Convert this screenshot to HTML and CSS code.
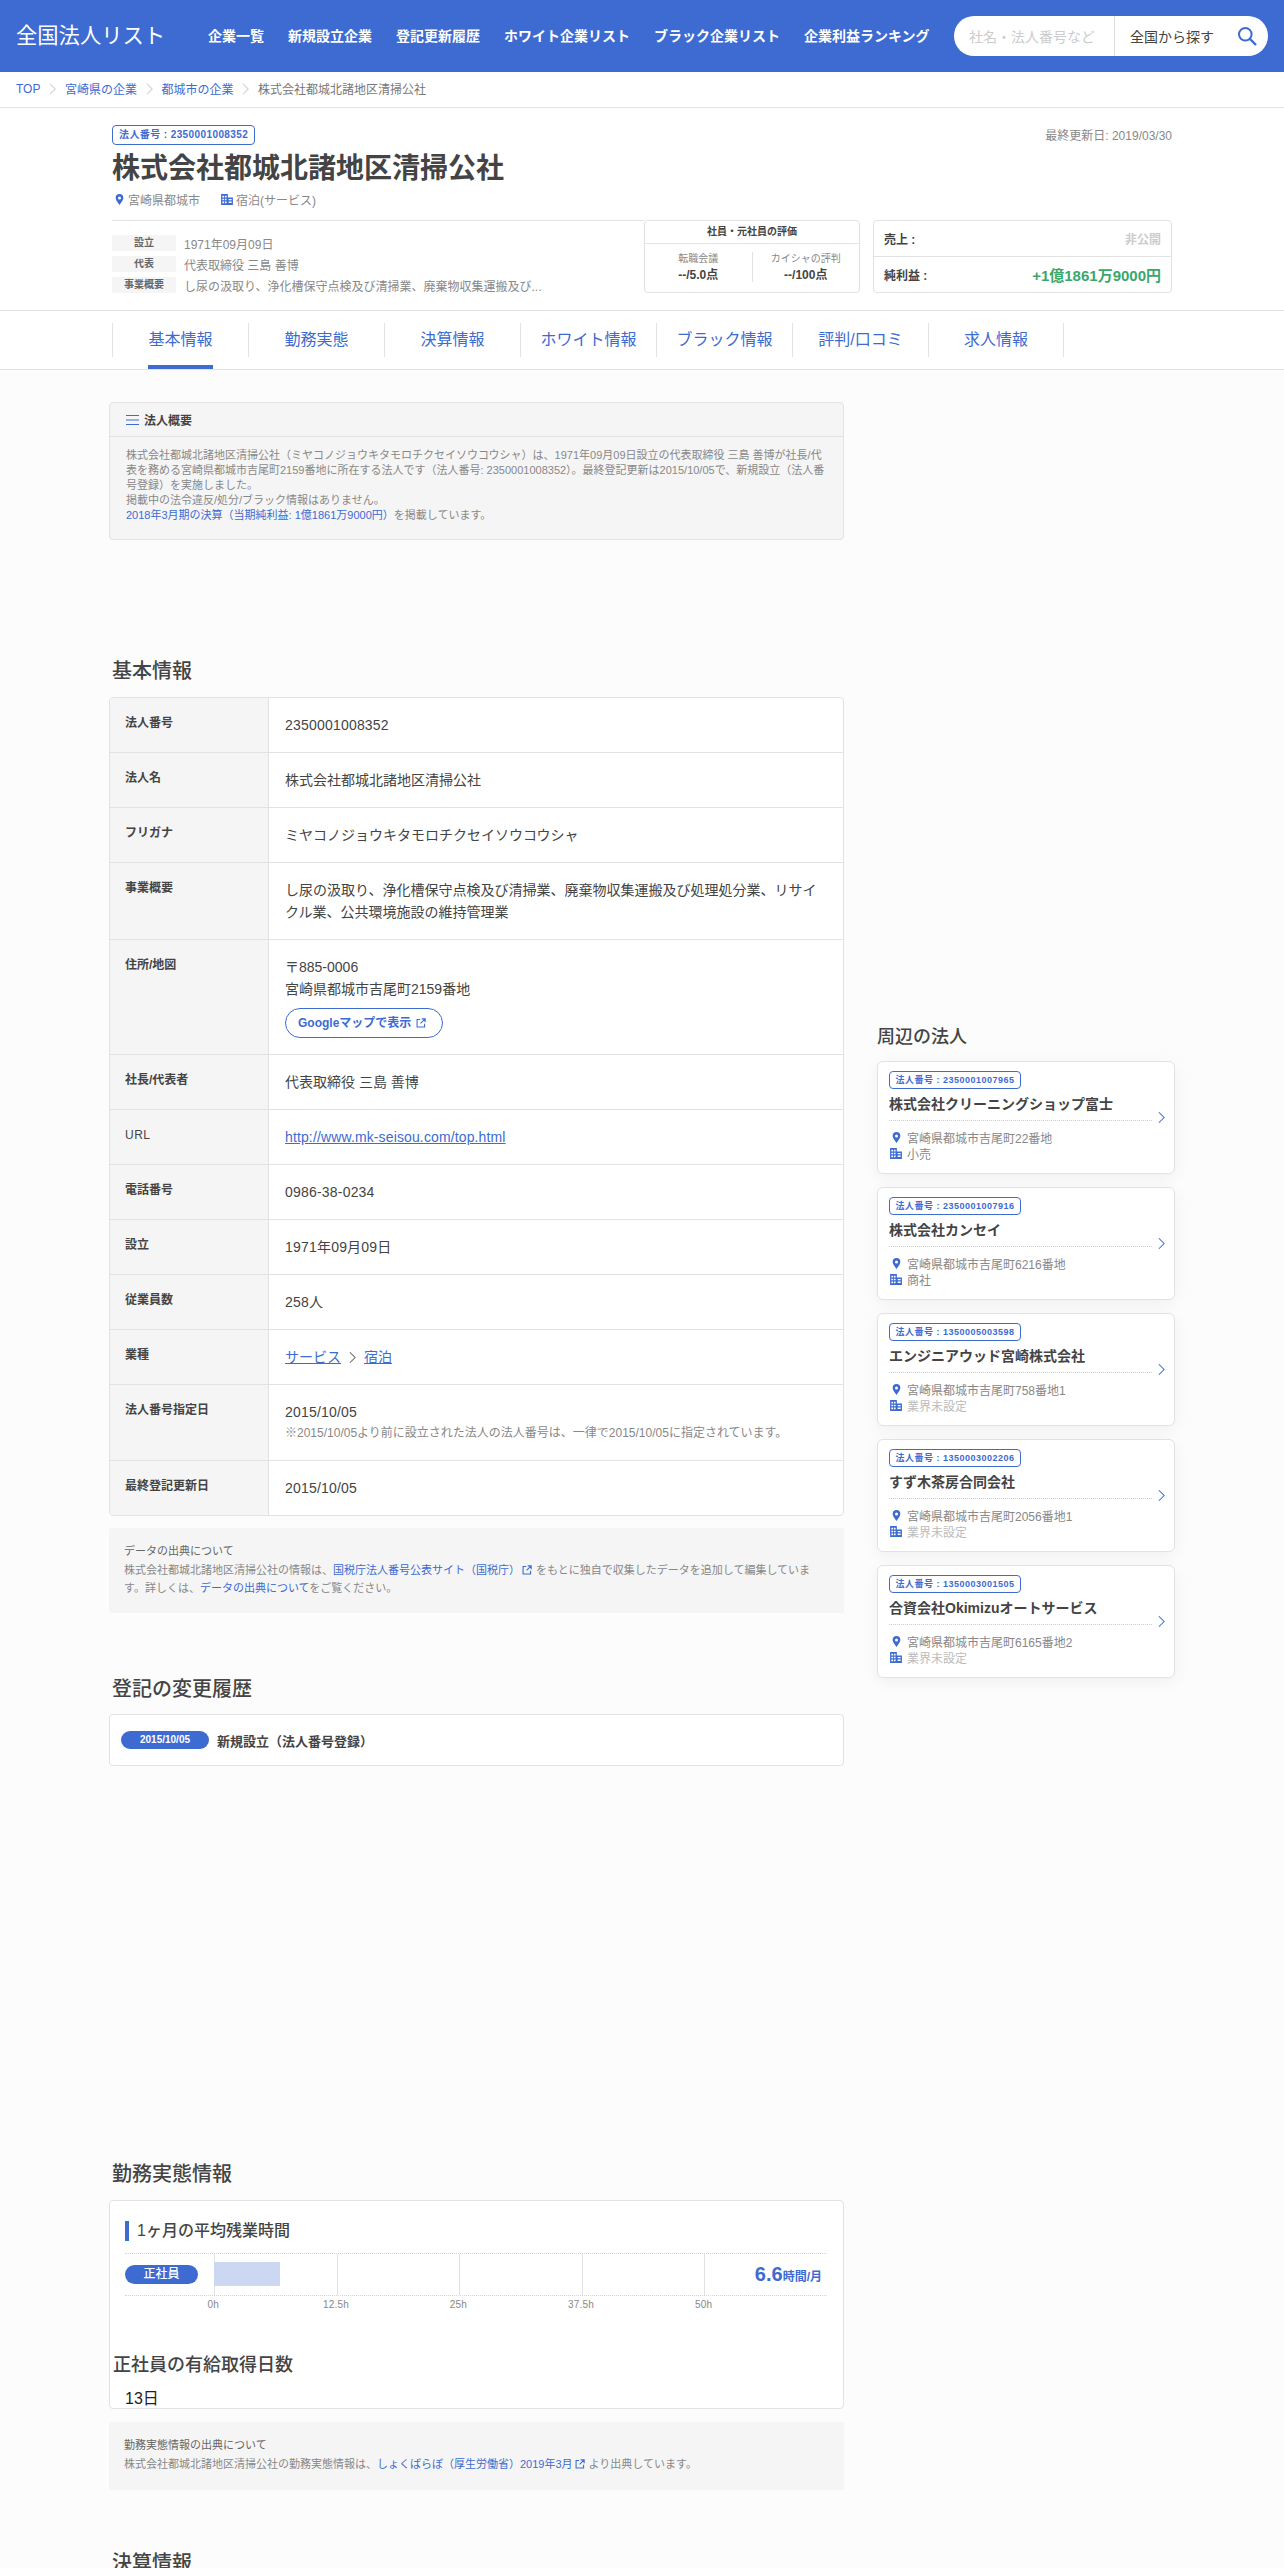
FILE: index.html
```html
<!DOCTYPE html>
<html lang="ja">
<head>
<meta charset="utf-8">
<title>株式会社都城北諸地区清掃公社</title>
<link rel="stylesheet" href="styles.css">
</head>
<body>
<svg class="defs" width="0" height="0" aria-hidden="true">
  <symbol id="pin" viewBox="0 0 12 16"><path fill="#3d6bd1" fill-rule="evenodd" d="M6 0a5.6 5.6 0 0 1 5.6 5.6C11.600 9.500 6 16 6 16S.4 9.500.4 5.600A5.600 5.600 0 0 1 6 0zm0 3.500a2.200 2.200 0 1 0 0 4.400 2.200 2.200 0 0 0 0-4.400z"/></symbol>
  <symbol id="bld" viewBox="0 0 14 13"><path fill="#3d6bd1" fill-rule="evenodd" d="M0 0h8v4h6v9H0zM1.500 2v2h2V2zm3 0v2h2V2zm-3 3.500v2h2v-2zm3 0v2h2v-2zm-3 3.500v2h2V9zm3 0v2h2V9zM9 6v1.500h3.500V6zm0 3v1.500h3.500V9z"/></symbol>
  <symbol id="ext" viewBox="0 0 12 12"><path fill="none" stroke="currentColor" stroke-width="1.300" d="M5 1.700H1.300v9h9V7M6.800 1H11v4.200M11 1 5.500 6.500"/></symbol>
  <symbol id="chev" viewBox="0 0 8 14"><path fill="none" stroke="currentColor" stroke-width="1.200" d="M1 1l6 6-6 6"/></symbol>
</svg>

<header class="site-header">
  <a class="logo">全国法人リスト</a>
  <nav class="main-nav">
    <a>企業一覧</a><a>新規設立企業</a><a>登記更新履歴</a><a>ホワイト企業リスト</a><a>ブラック企業リスト</a><a>企業利益ランキング</a>
  </nav>
  <div class="search">
    <span class="search-input">社名・法人番号など</span>
    <span class="search-area">全国から探す</span>
    <svg class="search-icon" viewBox="0 0 20 20" width="20" height="20"><circle cx="8.300" cy="8.300" r="6.300" fill="none" stroke="#3d6bd1" stroke-width="2"/><path d="M13 13l6 6" stroke="#3d6bd1" stroke-width="2.400"/></svg>
  </div>
</header>

<div class="crumbs">
  <a>TOP</a><svg class="crumb-sep"><use href="#chev"/></svg>
  <a>宮崎県の企業</a><svg class="crumb-sep"><use href="#chev"/></svg>
  <a>都城市の企業</a><svg class="crumb-sep"><use href="#chev"/></svg>
  <span>株式会社都城北諸地区清掃公社</span>
</div>

<section class="company">
  <div class="company-top">
    <span class="badge">法人番号 : 2350001008352</span>
    <span class="updated">最終更新日: 2019/03/30</span>
  </div>
  <h1 class="company-name">株式会社都城北諸地区清掃公社</h1>
  <div class="company-meta">
    <svg class="i-pin"><use href="#pin"/></svg><span>宮崎県都城市</span>
    <svg class="i-bld"><use href="#bld"/></svg><span>宿泊(サービス)</span>
  </div>
  <div class="company-foot">
    <dl class="facts">
      <div class="fact"><dt>設立</dt><dd>1971年09月09日</dd></div>
      <div class="fact"><dt>代表</dt><dd>代表取締役 三島 善博</dd></div>
      <div class="fact"><dt>事業概要</dt><dd>し尿の汲取り、浄化槽保守点検及び清掃業、廃棄物収集運搬及び...</dd></div>
    </dl>
    <div class="eval">
      <div class="eval-head">社員・元社員の評価</div>
      <div class="eval-body">
        <div class="eval-col"><span>転職会議</span><b>--/5.0点</b></div>
        <div class="eval-col"><span>カイシャの評判</span><b>--/100点</b></div>
      </div>
    </div>
    <div class="money">
      <div class="money-row"><b>売上 :</b><b class="muted">非公開</b></div>
      <div class="money-row"><b>純利益 :</b><b class="profit">+1億1861万9000円</b></div>
    </div>
  </div>
</section>

<nav class="tabs">
  <a class="tab active"><span>基本情報</span></a>
  <a class="tab"><span>勤務実態</span></a>
  <a class="tab"><span>決算情報</span></a>
  <a class="tab"><span>ホワイト情報</span></a>
  <a class="tab"><span>ブラック情報</span></a>
  <a class="tab"><span>評判/口コミ</span></a>
  <a class="tab last"><span>求人情報</span></a>
</nav>

<div class="layout">
  <main class="main">
    <section class="summary">
      <div class="summary-head">
        <svg class="list-icon" viewBox="0 0 13 10" width="13" height="10"><path d="M0 .5h13M0 5h13M0 9.500h13" stroke="#3d6bd1"/></svg>
        <b>法人概要</b>
      </div>
      <p class="summary-body">株式会社都城北諸地区清掃公社（ミヤコノジョウキタモロチクセイソウコウシャ）は、1971年09月09日設立の代表取締役 三島 善博が社長/代表を務める宮崎県都城市吉尾町2159番地に所在する法人です（法人番号: 2350001008352）。最終登記更新は2015/10/05で、新規設立（法人番号登録）を実施しました。<br>掲載中の法令違反/処分/ブラック情報はありません。<br><a>2018年3月期の決算（当期純利益: 1億1861万9000円）</a>を掲載しています。</p>
    </section>

    <h2 class="sec-title first">基本情報</h2>
    <div class="info">
      <div class="info-row"><div class="info-k">法人番号</div><div class="info-v num">2350001008352</div></div>
      <div class="info-row"><div class="info-k">法人名</div><div class="info-v">株式会社都城北諸地区清掃公社</div></div>
      <div class="info-row"><div class="info-k">フリガナ</div><div class="info-v">ミヤコノジョウキタモロチクセイソウコウシャ</div></div>
      <div class="info-row"><div class="info-k">事業概要</div><div class="info-v">し尿の汲取り、浄化槽保守点検及び清掃業、廃棄物収集運搬及び処理処分業、リサイクル業、公共環境施設の維持管理業</div></div>
      <div class="info-row"><div class="info-k">住所/地図</div><div class="info-v">〒885-0006<br>宮崎県都城市吉尾町2159番地<a class="map-btn">Googleマップで表示<svg class="i-ext"><use href="#ext"/></svg></a></div></div>
      <div class="info-row"><div class="info-k">社長/代表者</div><div class="info-v">代表取締役 三島 善博</div></div>
      <div class="info-row"><div class="info-k plain">URL</div><div class="info-v"><a class="ul url">http://www.mk-seisou.com/top.html</a></div></div>
      <div class="info-row"><div class="info-k">電話番号</div><div class="info-v num">0986-38-0234</div></div>
      <div class="info-row"><div class="info-k">設立</div><div class="info-v num">1971年09月09日</div></div>
      <div class="info-row"><div class="info-k">従業員数</div><div class="info-v num">258人</div></div>
      <div class="info-row"><div class="info-k">業種</div><div class="info-v"><a class="ul">サービス</a><svg class="i-chev"><use href="#chev"/></svg><a class="ul">宿泊</a></div></div>
      <div class="info-row"><div class="info-k">法人番号指定日</div><div class="info-v"><span class="num">2015/10/05</span><div class="info-note">※2015/10/05より前に設立された法人の法人番号は、一律で2015/10/05に指定されています。</div></div></div>
      <div class="info-row"><div class="info-k">最終登記更新日</div><div class="info-v num">2015/10/05</div></div>
    </div>
    <div class="source">
      <div class="source-title">データの出典について</div>
      <p>株式会社都城北諸地区清掃公社の情報は、<a>国税庁法人番号公表サイト（国税庁）<svg class="i-ext-s"><use href="#ext"/></svg></a>をもとに独自で収集したデータを追加して編集しています。詳しくは、<a>データの出典について</a>をご覧ください。</p>
    </div>

    <h2 class="sec-title history-title">登記の変更履歴</h2>
    <div class="history">
      <span class="pill date">2015/10/05</span>
      <b>新規設立（法人番号登録）</b>
    </div>

    <h2 class="sec-title work-title">勤務実態情報</h2>
    <div class="work">
      <h3 class="bar-title">1ヶ月の平均残業時間</h3>
      <div class="chart">
        <span class="pill staff">正社員</span>
        <div class="plot">
          <i></i><i></i><i></i><i></i><i></i>
          <div class="plot-bar"></div>
          <div class="plot-value"><b>6.6</b><span>時間/月</span></div>
        </div>
      </div>
      <div class="axis"><span>0h</span><span>12.5h</span><span>25h</span><span>37.5h</span><span>50h</span></div>
      <h3 class="leave-title">正社員の有給取得日数</h3>
      <div class="leave-value">13日</div>
    </div>
    <div class="source source-work">
      <div class="source-title">勤務実態情報の出典について</div>
      <p>株式会社都城北諸地区清掃公社の勤務実態情報は、<a>しょくばらぼ（厚生労働省）2019年3月<svg class="i-ext-s"><use href="#ext"/></svg></a>より出典しています。</p>
    </div>

    <h2 class="sec-title finance-title">決算情報</h2>
  </main>

  <aside class="side">
    <h2 class="side-title">周辺の法人</h2>
    <a class="card">
      <span class="badge small">法人番号 : 2350001007965</span>
      <div class="card-name">株式会社クリーニングショップ富士</div>
      <div class="card-line"><svg class="i-pin"><use href="#pin"/></svg>宮崎県都城市吉尾町22番地</div>
      <div class="card-line"><svg class="i-bld"><use href="#bld"/></svg>小売</div>
      <svg class="card-chev"><use href="#chev"/></svg>
    </a>
    <a class="card">
      <span class="badge small">法人番号 : 2350001007916</span>
      <div class="card-name">株式会社カンセイ</div>
      <div class="card-line"><svg class="i-pin"><use href="#pin"/></svg>宮崎県都城市吉尾町6216番地</div>
      <div class="card-line"><svg class="i-bld"><use href="#bld"/></svg>商社</div>
      <svg class="card-chev"><use href="#chev"/></svg>
    </a>
    <a class="card">
      <span class="badge small">法人番号 : 1350005003598</span>
      <div class="card-name">エンジニアウッド宮崎株式会社</div>
      <div class="card-line"><svg class="i-pin"><use href="#pin"/></svg>宮崎県都城市吉尾町758番地1</div>
      <div class="card-line unset"><svg class="i-bld"><use href="#bld"/></svg>業界未設定</div>
      <svg class="card-chev"><use href="#chev"/></svg>
    </a>
    <a class="card">
      <span class="badge small">法人番号 : 1350003002206</span>
      <div class="card-name">すず木茶房合同会社</div>
      <div class="card-line"><svg class="i-pin"><use href="#pin"/></svg>宮崎県都城市吉尾町2056番地1</div>
      <div class="card-line unset"><svg class="i-bld"><use href="#bld"/></svg>業界未設定</div>
      <svg class="card-chev"><use href="#chev"/></svg>
    </a>
    <a class="card">
      <span class="badge small">法人番号 : 1350003001505</span>
      <div class="card-name">合資会社Okimizuオートサービス</div>
      <div class="card-line"><svg class="i-pin"><use href="#pin"/></svg>宮崎県都城市吉尾町6165番地2</div>
      <div class="card-line unset"><svg class="i-bld"><use href="#bld"/></svg>業界未設定</div>
      <svg class="card-chev"><use href="#chev"/></svg>
    </a>
  </aside>
</div>
</body>
</html>
```
FILE: styles.css
```css
* { box-sizing: border-box; }
html, body { margin: 0; padding: 0; }
body {
  height: 2568px;
  overflow: hidden;
  background: #fcfcfc;
  color: #444;
  font-family: "Liberation Sans", "Noto Sans CJK JP", sans-serif;
  font-size: 14px;
}
h1, h2, h3, p, dl, dd { margin: 0; }
.defs { position: absolute; }

/* header */
.site-header {
  display: flex;
  align-items: center;
  height: 72px;
  padding: 0 16px;
  background: #3d6bd1;
  color: #fff;
}
.logo { width: 192px; font-size: 21.3px; font-weight: 400; line-height: 24px; white-space: nowrap; }
.main-nav { display: flex; gap: 24px; font-size: 14px; font-weight: 700; margin-top: -2px; white-space: nowrap; }
.search {
  display: flex;
  align-items: center;
  width: 314px;
  height: 40px;
  margin-left: auto;
  background: #fff;
  border-radius: 20px;
  font-size: 14px;
}
.search-input { width: 160px; padding-left: 15px; color: #ccc; white-space: nowrap; }
.search-area { flex: 1; align-self: stretch; display: flex; align-items: center; padding-left: 15px; border-left: 1px solid #ddd; color: #444; }
.search-icon { margin-right: 11px; }

/* breadcrumb */
.crumbs {
  display: flex;
  align-items: center;
  height: 36px;
  padding: 0 16px 2px;
  background: #fff;
  border-bottom: 1px solid #e2e2e2;
  font-size: 12px;
  color: #777;
}
.crumbs a { color: #3d6bd1; }
.crumb-sep { width: 7px; height: 14px; margin: 0 8.500px 0 9px; color: #ccc; }

/* company */
.company {
  height: 203px;
  padding: 16px 112px 0;
  background: #fff;
  border-bottom: 1px solid #e2e2e2;
}
.company-top { display: flex; justify-content: space-between; align-items: center; height: 21px; }
.badge {
  display: inline-block;
  height: 20px;
  padding: 0 6px;
  border: 1px solid #3d6bd1;
  border-radius: 4px;
  color: #3d6bd1;
  font-size: 10px;
  font-weight: 700;
  line-height: 18px;
  letter-spacing: .4px;
  white-space: nowrap;
}
.updated { font-size: 12px; color: #888; }
.company-name { margin-top: 6px; font-size: 28px; line-height: 36px; font-weight: 700; color: #444; }
.company-meta { display: flex; align-items: center; height: 20px; margin-top: 2px; font-size: 12px; color: #888; }
.company-meta .i-pin { margin: 0 4px 0 3px; }
.company-meta .i-bld { margin: 0 3px 0 21px; }
.i-pin { width: 9px; height: 11px; flex: none; }
.i-bld { width: 12px; height: 11px; flex: none; }
.company-foot { display: flex; align-items: flex-start; margin-top: 11px; }
.facts { width: 532px; margin-right: 0; padding-top: 14px; border-top: 1px solid #e2e2e2; }
.fact { display: flex; align-items: center; height: 16px; margin-bottom: 5px; }
.fact dt { width: 64px; height: 16px; background: #f5f5f5; color: #666; font-size: 10px; font-weight: 700; line-height: 16px; text-align: center; }
.fact dd { margin-left: 8px; font-size: 12px; color: #888; white-space: nowrap; }
.eval, .money { height: 73px; background: #fff; border: 1px solid #e2e2e2; border-radius: 4px; }
.eval { width: 216px; }
.eval-head { height: 23px; border-bottom: 1px solid #e2e2e2; color: #444; font-size: 10px; font-weight: 700; line-height: 22px; text-align: center; }
.eval-body { display: flex; padding-top: 8px; }
.eval-col { flex: 1; display: flex; flex-direction: column; align-items: center; height: 30px; }
.eval-col + .eval-col { border-left: 1px solid #e2e2e2; }
.eval-col span { font-size: 10px; line-height: 14px; color: #888; }
.eval-col b { font-size: 12px; line-height: 19px; color: #444; }
.money { width: 299px; margin-left: 13px; }
.money-row { display: flex; justify-content: space-between; align-items: center; height: 35px; padding: 0 10px; font-size: 12px; }
.money-row + .money-row { height: 36px; border-top: 1px solid #e2e2e2; }
.muted { color: #ccc; }
.profit { color: #3aa76d; font-size: 15px; }

/* tabs */
.tabs {
  display: flex;
  height: 59px;
  padding: 12px 0 0 112px;
  background: #fff;
  border-bottom: 1px solid #e2e2e2;
}
.tab {
  width: 136px;
  height: 34px;
  border-left: 1px solid #e2e2e2;
  color: #3d6bd1;
  font-size: 16px;
  line-height: 33px;
  text-align: center;
}
.tab.last { border-right: 1px solid #e2e2e2; }
.tab span { display: inline-block; height: 46px; white-space: nowrap; }
.tab.active span { border-bottom: 4px solid #3d6bd1; }

/* layout */
.layout { display: flex; gap: 33px; padding-left: 109px; }
.main { width: 735px; padding-top: 32px; }
.side { width: 298px; padding-top: 654px; }

/* summary */
.summary { height: 138px; background: #f5f5f5; border: 1px solid #e2e2e2; border-radius: 4px; }
.summary-head { display: flex; align-items: center; gap: 5px; height: 34px; padding-left: 16px; border-bottom: 1px solid #e2e2e2; font-size: 12px; }
.summary-body { padding: 11px 16px 0; font-size: 11px; line-height: 15px; color: #888; }
.summary-body a { color: #3d6bd1; }

/* sections */
.sec-title { padding-left: 3px; font-size: 20px; line-height: 28px; font-weight: 500; color: #444; }
.first { margin-top: 117px; margin-bottom: 12px; }
.history-title { margin-top: 62px; margin-bottom: 11px; }
.work-title { margin-top: 394px; margin-bottom: 12px; }
.finance-title { margin-top: 59px; }

/* info table */
.info { background: #fff; border: 1px solid #e2e2e2; border-radius: 4px; overflow: hidden; }
.info-row { display: flex; border-bottom: 1px solid #e2e2e2; }
.info-row:last-child { border-bottom: 0; }
.info-k {
  flex: none;
  width: 159px;
  padding: 14px 15px 0;
  background: #f5f5f5;
  border-right: 1px solid #e2e2e2;
  font-size: 12px;
  font-weight: 700;
  line-height: 22px;
}
.info-k.plain { font-weight: 400; letter-spacing: .5px; }
.info-v { flex: 1; padding: 16px; font-size: 14px; line-height: 22px; color: #444; }
.num { letter-spacing: .2px; }
.url { letter-spacing: .13px; }
.ul { color: #3d6bd1; text-decoration: underline; }
.map-btn {
  display: flex;
  align-items: center;
  width: 158px;
  height: 30px;
  margin-top: 8px;
  padding-left: 12px;
  border: 1px solid #3d6bd1;
  border-radius: 15px;
  color: #3d6bd1;
  font-size: 12px;
  font-weight: 700;
}
.i-ext { width: 10px; height: 10px; margin-left: 5px; }
.i-chev { width: 7px; height: 13px; margin: 0 8px; vertical-align: -2px; color: #666; }
.info-note { font-size: 12px; line-height: 21px; color: #888; }

/* source note */
.source { height: 85px; margin-top: 12px; padding: 13px 15px 0; background: #f5f5f5; border-radius: 3px; font-size: 11px; color: #888; }
.source-title { height: 21px; line-height: 20px; color: #666; }
.source p { line-height: 17.500px; }
.source a { color: #3d6bd1; }
.i-ext-s { width: 10px; height: 10px; margin: 0 4px 0 2px; vertical-align: -1px; }
.source-work { height: 68px; margin-top: 13px; }

/* history */
.history { display: flex; align-items: center; gap: 8px; height: 52px; padding: 0 11px; background: #fff; border: 1px solid #e2e2e2; border-radius: 4px; font-size: 13px; }
.pill { display: block; background: #3d6bd1; color: #fff; font-weight: 700; text-align: center; }
.date { width: 88px; height: 18px; border-radius: 9px; font-size: 10px; line-height: 18px; }

/* work */
.work { height: 209px; padding: 20px 16px 0 15px; background: #fff; border: 1px solid #e2e2e2; border-radius: 4px; }
.bar-title { height: 20px; padding-left: 8px; border-left: 4px solid #3d6bd1; font-size: 16px; font-weight: 500; line-height: 20px; }
.chart { display: flex; align-items: center; height: 43px; margin-top: 12px; border-top: 1px dotted #d5d5d5; border-bottom: 1px dotted #d5d5d5; }
.staff { width: 74px; height: 19px; border-radius: 10px; font-size: 12px; font-weight: 500; line-height: 19px; }
.plot { position: relative; display: flex; flex: 1; height: 41px; margin-left: 16px; }
.plot i { width: 122.600px; border-left: 1px solid #e2e2e2; }
.plot-bar { position: absolute; left: 0; top: 8px; width: 66px; height: 24px; background: #ccd8f2; }
.plot-value { position: absolute; right: 5px; top: 7px; color: #3d6bd1; font-weight: 700; line-height: 26px; white-space: nowrap; }
.plot-value b { font-size: 20px; }
.plot-value span { font-size: 12px; }
.axis { display: flex; height: 18px; padding-left: 27px; font-size: 10px; line-height: 18px; letter-spacing: .2px; color: #888; }
.axis span { width: 122.600px; flex: none; text-align: center; }
.leave-title { margin: 38px 0 0 -12px; font-size: 18px; font-weight: 500; line-height: 26px; }
.leave-value { margin-top: 9px; font-size: 16px; line-height: 24px; color: #222; }

/* side */
.side-title { font-size: 18px; font-weight: 500; line-height: 26px; margin-bottom: 11px; }
.card {
  position: relative;
  display: block;
  height: 113px;
  margin-bottom: 13px;
  padding: 8px 11px 0;
  background: #fff;
  border: 1px solid #e2e2e2;
  border-radius: 6px;
  box-shadow: 0 4px 16px rgba(0, 0, 0, .05);
}
.badge.small { height: 18px; padding: 0 5.500px; font-size: 9px; line-height: 16px; letter-spacing: .5px; border-radius: 4px; }
.card-name { height: 32px; padding-top: 4px; margin-bottom: 8px; border-bottom: 1px dotted #ccc; width: 263px; font-size: 14px; font-weight: 700; line-height: 22px; white-space: nowrap; }
.card-line { display: flex; align-items: center; height: 16px; font-size: 12px; color: #888; white-space: nowrap; }
.card-line .i-pin { margin: 1px 6px 0 3px; }
.card-line .i-bld { margin: 1px 5px 0 1px; }
.card-line.unset { color: #bbb; }
.card-chev { position: absolute; right: 9px; top: 49px; width: 7px; height: 13px; color: #3d6bd1; }
```
